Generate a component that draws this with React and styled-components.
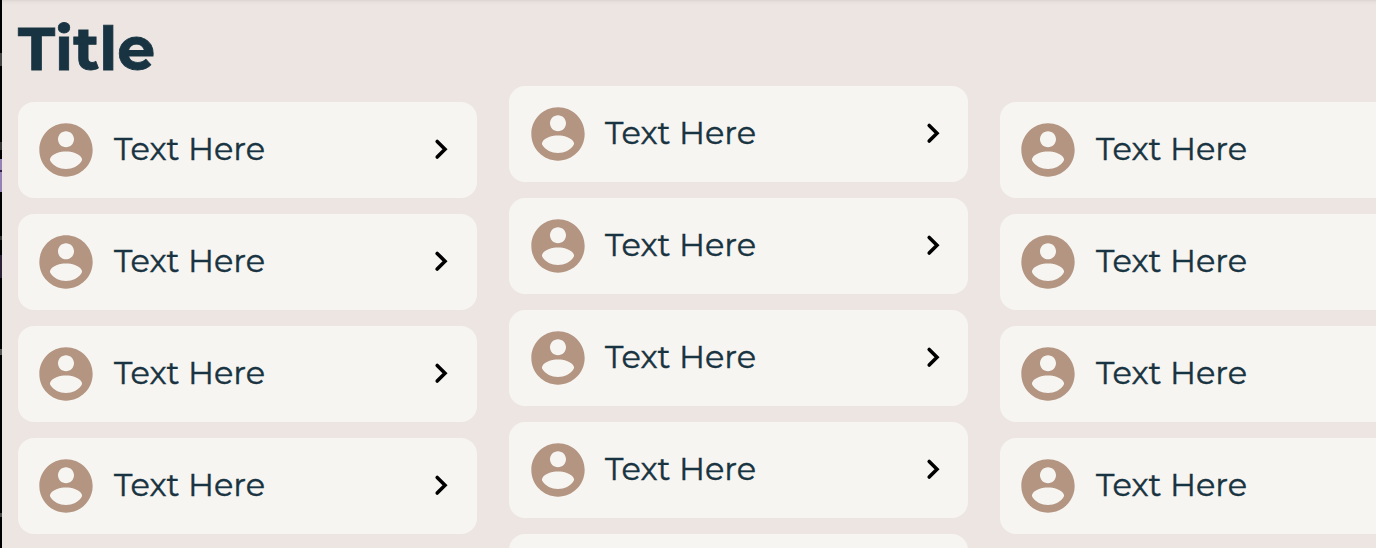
import React from 'react';
import styled, { createGlobalStyle } from 'styled-components';

const GlobalStyle = createGlobalStyle`
  * { box-sizing: border-box; }
  body {
    margin: 0;
    overflow: hidden;
    background: #ede5e2;
    color: #183341;
    font-family: Montserrat, Inter, "Liberation Sans", sans-serif;
  }
`;

const Page = styled.div`
  display: flex;
  height: 548px;
  overflow: hidden;
`;

const Edge = styled.div`
  flex: none;
  width: 2px;
  background: linear-gradient(
    #000 0 53px, #444 53px 66px, #000 66px 142px, #333 142px 150px,
    #000 150px 159px, #9681b5 159px 170px, #2c213c 170px 172px,
    #9681b5 172px 192px, #000 192px 236px, #333 236px 240px,
    #000 240px 255px, #2b2238 255px 278px, #000 278px 349px,
    #555 349px 355px, #000 355px 513px, #444 513px 517px, #000 517px
  );
`;

const Main = styled.main`
  flex: 1;
  min-width: 0;
  padding-left: 16px;
  overflow: hidden;
  background: linear-gradient(#ddd4d1, #e8e0dd 2px, #ede5e2 5px);
`;

const Columns = styled.div`
  display: grid;
  grid-template-columns: repeat(3, 459px);
  column-gap: 32px;
  align-items: start;
`;

const Column = styled.section`
  display: flex;
  flex-direction: column;
  gap: 16px;
  padding-top: ${({ $offset }) => $offset}px;
`;

const Title = styled.h1`
  height: 86px;
  margin: 0;
  padding-top: 12px;
  font-size: 60px;
  line-height: 74px;
  font-weight: 700;
  -webkit-text-stroke: 0.8px currentColor;
`;

const Card = styled.article`
  display: flex;
  align-items: center;
  flex: none;
  height: 96px;
  padding: ${({ $nudge }) => `0 ${14 - $nudge}px 0 ${16 + $nudge}px`};
  border-radius: 16px;
  background: #f7f5f1;
`;

const Label = styled.span`
  flex: 1;
  margin-left: ${({ $nudge }) => 16 - $nudge}px;
  padding-bottom: 2px;
  font-size: 32px;
  line-height: 40px;
  font-weight: 400;
  -webkit-text-stroke: 0.4px currentColor;
`;

const Avatar = styled.svg`
  flex: none;
  width: 64px;
  height: 64px;
  fill: #b39582;
`;

const Chevron = styled.svg`
  flex: none;
  width: 40px;
  height: 40px;
  fill: none;
  stroke: #000;
  stroke-width: 3.6;
`;

function ListCard({ nudge = 0 }) {
  return (
    <Card $nudge={nudge}>
      <Avatar viewBox="0 0 24 24" aria-hidden="true">
        <path d="M12 2C6.48 2 2 6.48 2 12s4.48 10 10 10 10-4.48 10-10S17.52 2 12 2zm0 3c1.66 0 3 1.34 3 3s-1.34 3-3 3-3-1.34-3-3 1.34-3 3-3zm0 14.1c-2.5 0-4.6-1.1-5.8-2.9-.27-.4-.27-.8-.05-1.2C7.1 13.3 9.9 12.6 12 12.6s4.9.7 5.85 2.4c.22.4.22.8-.05 1.2-1.2 1.8-3.3 2.9-5.8 2.9z" />
      </Avatar>
      <Label $nudge={nudge}>Text Here</Label>
      <Chevron viewBox="0 0 40 40" aria-hidden="true">
        <path d="M14.2 11.4 22 19.2 14.2 27" strokeLinecap="round" />
      </Chevron>
    </Card>
  );
}

const cards = (count, nudge) =>
  Array.from({ length: count }, (_, i) => <ListCard key={i} nudge={nudge} />);

export default function App() {
  return (
    <Page>
      <GlobalStyle />
      <Edge />
      <Main>
        <Columns>
          <Column $offset={0}>
            <Title>Title</Title>
            {cards(4)}
          </Column>
          <Column $offset={86}>
            {cards(4, 1)}
            <Card $nudge={1} />
          </Column>
          <Column $offset={102}>{cards(4)}</Column>
        </Columns>
      </Main>
    </Page>
  );
}
